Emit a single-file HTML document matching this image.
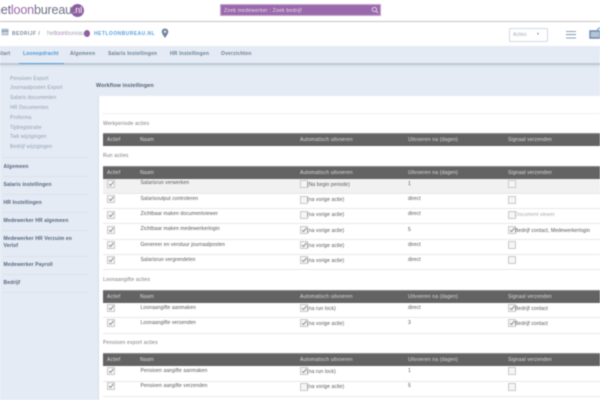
<!DOCTYPE html>
<html lang="nl">
<head>
<meta charset="utf-8">
<title>Workflow instellingen</title>
<style>
html,body{margin:0;padding:0;background:#fff}
#p{position:relative;width:600px;height:400px;overflow:hidden;background:#fff;font-family:"Liberation Sans",sans-serif;filter:blur(.45px)}
#p div,#p span.a{position:absolute;white-space:nowrap}
.nav{top:50px;font-size:5px;font-weight:bold;color:#6b7f96;letter-spacing:.18px;line-height:9px}
.s1{left:10px;font-size:5px;color:#8e9fb2;letter-spacing:.12px;line-height:8px}
.s2{left:3.5px;font-size:5.1px;font-weight:bold;color:#56677f;letter-spacing:.08px;line-height:8px}
.sep{left:3px;width:86px;height:1px;background:#dbe3ee}
.ttl{left:103px;font-size:5px;color:#777;letter-spacing:.2px;line-height:8px}
.th{left:102.5px;width:498px;height:13px;background:#636363;border-top:1px solid #8a8a8a;box-sizing:border-box}
.h{font-size:5px;color:#ddd;letter-spacing:.15px;line-height:8px}
.t{font-size:5px;color:#555;letter-spacing:.08px;line-height:8px}
.g{color:#aaa}
.r{left:102.5px;width:498px;height:1px;background:#e8e8e8}
.c{width:6px;height:6px;border:1px solid #c8c8c8;background:#f6f6f6;border-radius:.5px}
.c svg{position:absolute;left:0;top:0;width:6px;height:6px}
.c path{stroke:#888}
</style>
</head>
<body>
<div id="p">
<!-- top bar -->
<div style="left:-6px;top:3px;font-size:12.6px;line-height:15px;color:#6a6a8c;letter-spacing:-.2px">het<span style="color:#9b68ad">loon</span><span style="color:#6f7488">bureau</span></div>
<div style="left:71px;top:4px;width:13px;height:13px;border-radius:50%;background:#8d5f9f;color:#fff;font-size:9px;line-height:12px;text-align:center">.nl</div>
<div style="left:220px;top:4px;width:161px;height:12px;background:#9a69ab;border:.5px solid #c6a6d0;box-sizing:border-box"></div>
<div style="left:224px;top:6.5px;font-size:5px;line-height:8px;color:#eadff0;letter-spacing:.25px">Zoek medewerker : Zoek bedrijf</div>
<svg style="position:absolute;left:371px;top:6px" width="8" height="8" viewBox="0 0 8 8"><circle cx="3.4" cy="3.4" r="2.2" fill="none" stroke="#ddd0e4" stroke-width="1"/><path d="M5 5L7 7" stroke="#ddd0e4" stroke-width="1.1"/></svg>
<div style="left:0;top:20.5px;width:600px;height:1.5px;background:#c4c4c4"></div>
<!-- sub header -->
<svg style="position:absolute;left:1px;top:28px" width="8" height="8" viewBox="0 0 8 8"><path d="M1 1H7V7H1Z" fill="#c5d1e0" stroke="#8fa5c0" stroke-width=".6"/><path d="M.5 3H7.5" stroke="#7f98b8" stroke-width="1.2"/></svg>
<div style="left:12px;top:30px;font-size:5px;line-height:8px;font-weight:bold;color:#7f8da0;letter-spacing:.45px">BEDRIJF /</div>
<div style="left:47px;top:29.5px;font-size:6px;line-height:8px;color:#a9a9b4;letter-spacing:-.1px">het<span style="color:#a98ab6">loon</span>bureau</div>
<div style="left:84px;top:30px;width:6px;height:7px;border-radius:50%;background:#8d5f9f"></div>
<div style="left:94px;top:30px;font-size:5px;line-height:8px;font-weight:bold;color:#5c9fde;letter-spacing:.45px">HETLOONBUREAU.NL</div>
<svg style="position:absolute;left:161px;top:28px" width="8" height="11" viewBox="0 0 8 11"><path d="M4 .5C1.8.5.7 2.2.7 3.8.7 6 4 10 4 10S7.3 6 7.3 3.8C7.3 2.2 6.2.5 4 .5Z" fill="#73869f"/><circle cx="4" cy="3.7" r="1.2" fill="#dfe6ef"/></svg>
<div style="left:508.5px;top:27.5px;width:39px;height:14px;border:.7px solid #cfd9e6;border-radius:2px;box-sizing:border-box;background:#fff"></div>
<div style="left:513px;top:30.5px;font-size:5px;line-height:8px;color:#a4adb9">Acties</div>
<div style="left:537px;top:32.5px;width:0;height:0;border-left:1.7px solid transparent;border-right:1.7px solid transparent;border-top:2.4px solid #7d8896"></div>
<svg style="position:absolute;left:565px;top:30px" width="12" height="10" viewBox="0 0 12 10"><path d="M1 1.5H11M1 4.6H11M1 8H11" stroke="#8da0b8" stroke-width="1.1"/></svg>
<svg style="position:absolute;left:589px;top:27px" width="11" height="13" viewBox="0 0 11 13"><path d="M1 4H11V11H1Z" fill="#b4c4d8" stroke="#6f8aac" stroke-width="1.4"/><path d="M8 3L11 .5" stroke="#66a4dc" stroke-width="1.2"/></svg>
<!-- nav band -->
<div style="left:0;top:46px;width:600px;height:354px;background:#e4ebf4"></div>
<div style="left:0;top:63px;width:600px;height:1.5px;background:#bcc9d8"></div>
<div style="left:0;top:64.5px;width:600px;height:2px;background:#d9e2ec"></div>
<div class="nav" style="left:-2px">Start</div>
<div class="nav" style="left:23px;color:#4f95d8">Loonopdracht</div>
<div style="left:19px;top:62.5px;width:45px;height:1.2px;background:#5a9fdd"></div>
<div class="nav" style="left:70px">Algemeen</div>
<div class="nav" style="left:108px">Salaris Instellingen</div>
<div class="nav" style="left:170px">HR Instellingen</div>
<div class="nav" style="left:221px">Overzichten</div>
<!-- sidebar -->
<div class="s1" style="top:74.5px">Pensioen Export</div>
<div class="s1" style="top:84px">Journaalposten Export</div>
<div class="s1" style="top:94px">Salaris documenten</div>
<div class="s1" style="top:104px">HR Documenten</div>
<div class="s1" style="top:113.5px">Proforma</div>
<div class="s1" style="top:123.5px">Tijdregistratie</div>
<div class="s1" style="top:133px">Twk wijzigingen</div>
<div class="s1" style="top:143px">Bedrijf wijzigingen</div>
<div class="sep" style="top:157px"></div>
<div class="s2" style="top:162.5px">Algemeen</div>
<div class="sep" style="top:176px"></div>
<div class="s2" style="top:180.5px">Salaris instellingen</div>
<div class="sep" style="top:194px"></div>
<div class="s2" style="top:198.5px">HR Instellingen</div>
<div class="sep" style="top:212px"></div>
<div class="s2" style="top:216.5px">Medewerker HR algemeen</div>
<div class="sep" style="top:230px"></div>
<div class="s2" style="top:235px">Medewerker HR Verzuim en</div>
<div class="s2" style="top:242px">Verlof</div>
<div class="sep" style="top:256px"></div>
<div class="s2" style="top:260.5px">Medewerker Payroll</div>
<div class="sep" style="top:274px"></div>
<div class="s2" style="top:279px">Bedrijf</div>
<div class="sep" style="top:292px"></div>
<!-- main -->
<div style="left:96px;top:81.5px;font-size:5.4px;line-height:9px;font-weight:bold;color:#4f5f75;letter-spacing:.1px">Workflow instellingen</div>
<div style="left:98px;top:96px;width:502px;height:304px;background:#fff;border-left:1px solid #d5dee9;box-sizing:border-box"></div>
<div style="left:102px;top:113px;width:498px;height:1px;background:#f0f0f0"></div>
<div class="ttl" style="top:119.5px">Werkperiode acties</div>
<div class="th" style="top:133px"></div>
<div class="h" style="left:107px;top:136px">Actief</div><div class="h" style="left:140px;top:136px">Naam</div><div class="h" style="left:300px;top:136px">Automatisch uitvoeren</div><div class="h" style="left:408px;top:136px">Uitvoeren na (dagen)</div><div class="h" style="left:508px;top:136px">Signaal verzenden</div>
<div class="ttl" style="top:152px">Run acties</div>
<div class="th" style="top:166px"></div>
<div class="h" style="left:107px;top:168.5px">Actief</div><div class="h" style="left:140px;top:168.5px">Naam</div><div class="h" style="left:300px;top:168.5px">Automatisch uitvoeren</div><div class="h" style="left:408px;top:168.5px">Uitvoeren na (dagen)</div><div class="h" style="left:508px;top:168.5px">Signaal verzenden</div>
<div style="left:102.5px;top:179px;width:498px;height:14px;background:#f1f1f1"></div>
<div class="r" style="top:193px"></div><div class="r" style="top:208px"></div><div class="r" style="top:223px"></div><div class="r" style="top:239px"></div><div class="r" style="top:254px"></div><div class="r" style="top:269px"></div>
<!-- rows run -->
<div class="c" style="left:107px;top:180px"><svg viewBox="0 0 6 6"><path d="M1 3L2.5 4.7L5.5 .8" fill="none" stroke="#666" stroke-width=".9"/></svg></div>
<div class="t" style="left:140.5px;top:179px">Salarisrun verwerken</div>
<div class="c" style="left:300px;top:180px"></div><div class="t" style="left:307px;top:181px">(Na begin periode)</div>
<div class="t" style="left:408px;top:179.5px">1</div><div class="c" style="left:508px;top:180px"></div>

<div class="c" style="left:107px;top:195px"><svg viewBox="0 0 6 6"><path d="M1 3L2.5 4.7L5.5 .8" fill="none" stroke="#666" stroke-width=".9"/></svg></div>
<div class="t" style="left:140.5px;top:194.5px">Salarisoutput controleren</div>
<div class="c" style="left:300px;top:195.5px"></div><div class="t" style="left:307px;top:196px">(na vorige actie)</div>
<div class="t" style="left:408px;top:195px">direct</div><div class="c" style="left:508px;top:195.5px"></div>

<div class="c" style="left:107px;top:210.5px"><svg viewBox="0 0 6 6"><path d="M1 3L2.5 4.7L5.5 .8" fill="none" stroke="#666" stroke-width=".9"/></svg></div>
<div class="t" style="left:140.5px;top:210px">Zichtbaar maken documentviewer</div>
<div class="c" style="left:300px;top:210.5px"></div><div class="t" style="left:307px;top:211px">(na vorige actie)</div>
<div class="t" style="left:408px;top:210px">direct</div><div class="c" style="left:508px;top:210.5px"></div><div class="t g" style="left:515px;top:211px">Document viewer</div>

<div class="c" style="left:107px;top:225.5px"><svg viewBox="0 0 6 6"><path d="M1 3L2.5 4.7L5.5 .8" fill="none" stroke="#666" stroke-width=".9"/></svg></div>
<div class="t" style="left:140.5px;top:225px">Zichtbaar maken medewerkerlogin</div>
<div class="c" style="left:300px;top:226px"><svg viewBox="0 0 6 6"><path d="M1 3L2.5 4.7L5.5 .8" fill="none" stroke="#666" stroke-width=".9"/></svg></div><div class="t" style="left:307px;top:226.5px">(na vorige actie)</div>
<div class="t" style="left:408px;top:225.5px">5</div>
<div class="c" style="left:508px;top:226px"><svg viewBox="0 0 6 6"><path d="M1 3L2.5 4.7L5.5 .8" fill="none" stroke="#666" stroke-width=".9"/></svg></div><div class="t" style="left:515px;top:226.5px">Bedrijf contact, Medewerkerlogin</div>

<div class="c" style="left:107px;top:241px"><svg viewBox="0 0 6 6"><path d="M1 3L2.5 4.7L5.5 .8" fill="none" stroke="#666" stroke-width=".9"/></svg></div>
<div class="t" style="left:140.5px;top:240.5px">Genereer en verstuur journaalposten</div>
<div class="c" style="left:300px;top:241px"><svg viewBox="0 0 6 6"><path d="M1 3L2.5 4.7L5.5 .8" fill="none" stroke="#666" stroke-width=".9"/></svg></div><div class="t" style="left:307px;top:242px">(na vorige actie)</div>
<div class="t" style="left:408px;top:240.5px">direct</div><div class="c" style="left:508px;top:241px"></div>

<div class="c" style="left:107px;top:256px"><svg viewBox="0 0 6 6"><path d="M1 3L2.5 4.7L5.5 .8" fill="none" stroke="#666" stroke-width=".9"/></svg></div>
<div class="t" style="left:140.5px;top:256px">Salarisrun vergrendelen</div>
<div class="c" style="left:300px;top:256px"><svg viewBox="0 0 6 6"><path d="M1 3L2.5 4.7L5.5 .8" fill="none" stroke="#666" stroke-width=".9"/></svg></div><div class="t" style="left:307px;top:257px">(na vorige actie)</div>
<div class="t" style="left:408px;top:256px">direct</div><div class="c" style="left:508px;top:256px"></div>

<!-- loonaangifte -->
<div class="ttl" style="top:276px">Loonaangifte acties</div>
<div class="th" style="top:290px"></div>
<div class="h" style="left:107px;top:292.5px">Actief</div><div class="h" style="left:140px;top:292.5px">Naam</div><div class="h" style="left:300px;top:292.5px">Automatisch uitvoeren</div><div class="h" style="left:408px;top:292.5px">Uitvoeren na (dagen)</div><div class="h" style="left:508px;top:292.5px">Signaal verzenden</div>
<div class="c" style="left:107px;top:304px"><svg viewBox="0 0 6 6"><path d="M1 3L2.5 4.7L5.5 .8" fill="none" stroke="#666" stroke-width=".9"/></svg></div>
<div class="t" style="left:140.5px;top:303.5px">Loonaangifte aanmaken</div>
<div class="c" style="left:300px;top:304px"><svg viewBox="0 0 6 6"><path d="M1 3L2.5 4.7L5.5 .8" fill="none" stroke="#666" stroke-width=".9"/></svg></div><div class="t" style="left:307px;top:305px">(na run lock)</div>
<div class="t" style="left:408px;top:303.5px">direct</div>
<div class="c" style="left:508px;top:304px"><svg viewBox="0 0 6 6"><path d="M1 3L2.5 4.7L5.5 .8" fill="none" stroke="#666" stroke-width=".9"/></svg></div><div class="t" style="left:515px;top:305px">Bedrijf contact</div>
<div class="r" style="top:317px"></div>
<div class="c" style="left:107px;top:319px"><svg viewBox="0 0 6 6"><path d="M1 3L2.5 4.7L5.5 .8" fill="none" stroke="#666" stroke-width=".9"/></svg></div>
<div class="t" style="left:140.5px;top:319px">Loonaangifte versenden</div>
<div class="c" style="left:300px;top:319px"><svg viewBox="0 0 6 6"><path d="M1 3L2.5 4.7L5.5 .8" fill="none" stroke="#666" stroke-width=".9"/></svg></div><div class="t" style="left:307px;top:320px">(na vorige actie)</div>
<div class="t" style="left:408px;top:318.5px">3</div>
<div class="c" style="left:508px;top:319px"><svg viewBox="0 0 6 6"><path d="M1 3L2.5 4.7L5.5 .8" fill="none" stroke="#666" stroke-width=".9"/></svg></div><div class="t" style="left:515px;top:320px">Bedrijf contact</div>
<div class="r" style="top:332.5px"></div>

<!-- pensioen -->
<div class="ttl" style="top:339px">Pensioen export acties</div>
<div class="th" style="top:353px"></div>
<div class="h" style="left:107px;top:355.5px">Actief</div><div class="h" style="left:140px;top:355.5px">Naam</div><div class="h" style="left:300px;top:355.5px">Automatisch uitvoeren</div><div class="h" style="left:408px;top:355.5px">Uitvoeren na (dagen)</div><div class="h" style="left:508px;top:355.5px">Signaal verzenden</div>
<div class="c" style="left:107px;top:367px"><svg viewBox="0 0 6 6"><path d="M1 3L2.5 4.7L5.5 .8" fill="none" stroke="#666" stroke-width=".9"/></svg></div>
<div class="t" style="left:140.5px;top:366.5px">Pensioen aangifte aanmaken</div>
<div class="c" style="left:300px;top:367px"><svg viewBox="0 0 6 6"><path d="M1 3L2.5 4.7L5.5 .8" fill="none" stroke="#666" stroke-width=".9"/></svg></div><div class="t" style="left:307px;top:368px">(na run lock)</div>
<div class="t" style="left:408px;top:367px">1</div><div class="c" style="left:508px;top:367px"></div>
<div class="r" style="top:381px"></div>
<div class="c" style="left:107px;top:382px"><svg viewBox="0 0 6 6"><path d="M1 3L2.5 4.7L5.5 .8" fill="none" stroke="#666" stroke-width=".9"/></svg></div>
<div class="t" style="left:140.5px;top:382px">Pensioen aangifte verzenden</div>
<div class="c" style="left:300px;top:382.5px"></div><div class="t" style="left:307px;top:383px">(na vorige actie)</div>
<div class="t" style="left:408px;top:382px">5</div><div class="c" style="left:508px;top:382.5px"></div>
<div class="r" style="top:396px"></div>
</div>
</body>
</html>
